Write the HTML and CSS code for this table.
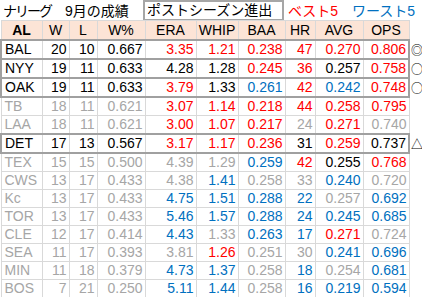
FILE: index.html
```html
<!DOCTYPE html>
<html lang="ja">
<head>
<meta charset="utf-8">
<link rel="stylesheet" href="styles.css">
</head>
<body>
<div class="sheet">
  <div class="titlebar">
    <div class="title"><span class="league">ナリーグ</span><span class="month">9月の成績</span></div>
    <div class="postbox">ポストシーズン進出</div>
    <div class="best">ベスト5</div>
    <div class="worst">ワースト5</div>
  </div>
  <table class="grid">
    <colgroup>
      <col class="c-team"><col class="c-w"><col class="c-l"><col class="c-pct"><col class="c-era"><col class="c-whip"><col class="c-baa"><col class="c-hr"><col class="c-avg"><col class="c-ops"><col class="c-mark">
    </colgroup>
    <thead>
      <tr class="head">
        <th class="al">AL</th><th>W</th><th>L</th><th>W%</th><th>ERA</th><th>WHIP</th><th>BAA</th><th>HR</th><th>AVG</th><th>OPS</th><th class="mark"></th>
      </tr>
    </thead>
    <tbody>
      <tr class="hl"><td class="team">BAL</td><td>20</td><td>10</td><td>0.667</td><td class="r">3.35</td><td class="r">1.21</td><td class="r">0.238</td><td class="r">47</td><td class="r">0.270</td><td class="r last">0.806</td><td class="mark">◎</td></tr>
      <tr class="hl"><td class="team">NYY</td><td>19</td><td>11</td><td>0.633</td><td>4.28</td><td>1.28</td><td class="r">0.245</td><td class="r">36</td><td>0.257</td><td class="r last">0.758</td><td class="mark">○</td></tr>
      <tr class="hl"><td class="team">OAK</td><td>19</td><td>11</td><td>0.633</td><td class="r">3.79</td><td>1.33</td><td class="b">0.261</td><td class="r">42</td><td class="b">0.242</td><td class="r last">0.748</td><td class="mark">○</td></tr>
      <tr class="dim"><td class="team">TB</td><td>18</td><td>11</td><td>0.621</td><td class="r">3.07</td><td class="r">1.14</td><td class="r">0.218</td><td class="r">44</td><td class="r">0.258</td><td class="r last">0.795</td><td class="mark"></td></tr>
      <tr class="dim"><td class="team">LAA</td><td>18</td><td>11</td><td>0.621</td><td class="r">3.00</td><td class="r">1.07</td><td class="r">0.217</td><td>24</td><td class="r">0.271</td><td class="last">0.740</td><td class="mark"></td></tr>
      <tr class="hl"><td class="team">DET</td><td>17</td><td>13</td><td>0.567</td><td class="r">3.17</td><td class="r">1.17</td><td class="r">0.236</td><td class="k">31</td><td class="r">0.259</td><td class="k last">0.737</td><td class="mark">△</td></tr>
      <tr class="dim"><td class="team">TEX</td><td>15</td><td>15</td><td>0.500</td><td>4.39</td><td>1.29</td><td class="b">0.259</td><td class="r">42</td><td class="k">0.255</td><td class="r last">0.768</td><td class="mark"></td></tr>
      <tr class="dim"><td class="team">CWS</td><td>13</td><td>17</td><td>0.433</td><td>4.38</td><td class="b">1.41</td><td>0.258</td><td>33</td><td class="b">0.240</td><td class="last">0.720</td><td class="mark"></td></tr>
      <tr class="dim"><td class="team">Kc</td><td>13</td><td>17</td><td>0.433</td><td class="b">4.75</td><td class="b">1.51</td><td class="b">0.288</td><td class="b">22</td><td>0.257</td><td class="b last">0.692</td><td class="mark"></td></tr>
      <tr class="dim"><td class="team">TOR</td><td>13</td><td>17</td><td>0.433</td><td class="b">5.46</td><td class="b">1.57</td><td class="b">0.288</td><td class="b">24</td><td class="b">0.245</td><td class="b last">0.685</td><td class="mark"></td></tr>
      <tr class="dim"><td class="team">CLE</td><td>12</td><td>17</td><td>0.414</td><td class="b">4.43</td><td>1.33</td><td class="b">0.263</td><td class="b">17</td><td class="r">0.271</td><td class="last">0.724</td><td class="mark"></td></tr>
      <tr class="dim"><td class="team">SEA</td><td>11</td><td>17</td><td>0.393</td><td>3.81</td><td class="r">1.26</td><td>0.251</td><td>30</td><td class="b">0.241</td><td class="b last">0.696</td><td class="mark"></td></tr>
      <tr class="dim"><td class="team">MIN</td><td>11</td><td>18</td><td>0.379</td><td class="b">4.73</td><td class="b">1.37</td><td>0.258</td><td class="b">18</td><td>0.254</td><td class="b last">0.681</td><td class="mark"></td></tr>
      <tr class="dim"><td class="team">BOS</td><td>7</td><td>21</td><td>0.250</td><td class="b">5.11</td><td class="b">1.44</td><td>0.258</td><td class="b">16</td><td class="b">0.219</td><td class="b last">0.594</td><td class="mark"></td></tr>
    </tbody>
  </table>
</div>
</body>
</html>
```
FILE: styles.css
```css
html, body {
  margin: 0;
  padding: 0;
  background: #ffffff;
}
body {
  font-family: "Liberation Sans", "Noto Sans CJK JP", sans-serif;
  font-size: 14px;
  color: #000000;
}
.sheet {
  width: 422px;
  overflow: hidden;
}
.titlebar {
  display: flex;
  align-items: center;
  height: 20px;
}
.title {
  width: 143px;
  padding-left: 3px;
  box-sizing: border-box;
  font-size: 14px;
  display: flex;
  gap: 14px;
  white-space: nowrap;
  overflow: hidden;
}
.league {
  letter-spacing: -2px;
}
.postbox {
  box-sizing: border-box;
  width: 141px;
  height: 20px;
  border: 2px solid #a6a6a6;
  border-bottom-width: 1px;
  padding-left: 2px;
  font-size: 14px;
  line-height: 17px;
  white-space: nowrap;
  overflow: hidden;
}
.best {
  color: #ff0000;
  font-size: 14px;
  margin-left: 4px;
  width: 64px;
  white-space: nowrap;
}
.worst {
  color: #0070c0;
  font-size: 14px;
  white-space: nowrap;
}
.grid {
  border-collapse: collapse;
  table-layout: fixed;
  width: 422px;
}
.c-team { width: 41px; }
.c-w { width: 27px; }
.c-l { width: 28px; }
.c-pct { width: 48px; }
.c-era { width: 51px; }
.c-whip { width: 42px; }
.c-baa { width: 47px; }
.c-hr { width: 30px; }
.c-avg { width: 48px; }
.c-ops { width: 46px; }
.c-mark { width: 14px; }
.grid th, .grid td {
  border: 1px solid #d9d9d9;
  padding: 0 2px 0 2px;
  height: 17px;
  line-height: 17px;
  white-space: nowrap;
  overflow: visible;
}
.grid th {
  background: #fce4d6;
  font-weight: normal;
  text-align: center;
  height: 18px;
}
.grid th.al {
  font-weight: bold;
}
.grid td {
  text-align: right;
}
.grid td.team {
  text-align: left;
  padding-left: 3px;
}
.grid .mark {
  border: none;
  background: #ffffff;
  text-align: left;
  padding: 0 0 0 1px;
  font-family: "Noto Sans CJK JP", sans-serif;
  font-size: 12px;
  overflow: hidden;
}
.grid tr.hl td {
  border-top: 2px solid #a0a0a0;
  border-bottom: 2px solid #a0a0a0;
  height: 17px;
}
.grid tr.hl td.team {
  border-left: 2px solid #a0a0a0;
}
.grid tr.hl td.last {
  border-right: 2px solid #a0a0a0;
}
.grid tr.hl td.mark {
  border: none;
}
.grid tr.dim td {
  color: #a6a6a6;
}
.grid td.r, .grid tr.dim td.r { color: #ff0000; }
.grid td.b, .grid tr.dim td.b { color: #0070c0; }
.grid td.k, .grid tr.dim td.k { color: #000000; }
```
